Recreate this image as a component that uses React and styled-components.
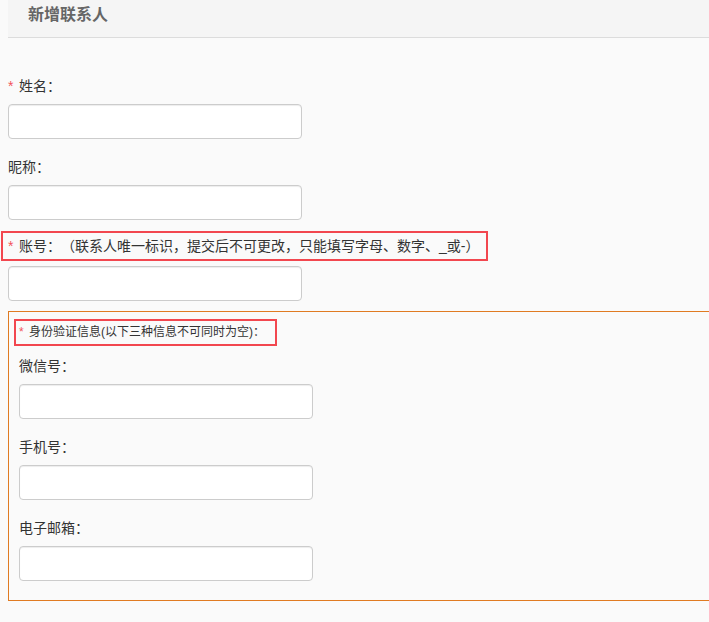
// Add-contact form
import styled, { createGlobalStyle } from 'styled-components'

const GlobalStyle = createGlobalStyle`
  html, body {
    margin: 0;
    background: #fafafa;
    overflow-x: hidden;
  }

  body {
    font-family: "Liberation Sans", "Noto Sans CJK SC", sans-serif;
    color: #333;
    text-spacing-trim: space-all;
  }
`

const Page = styled.div`
  padding-left: 8px;
`

const Header = styled.div`
  background: #f5f5f5;
  border-bottom: 1px solid #dcdcdc;
  height: 37px;
  padding: 0 20px;
`

const Title = styled.h3`
  color: #666;
  font-size: 16px;
  font-weight: bold;
  line-height: 30px;
  margin: 0;
`

const Form = styled.form`
  display: flex;
  flex-direction: column;
  padding-top: 35px;
`

const Field = styled.div`
  display: flex;
  flex-direction: column;
  align-items: flex-start;
  margin-bottom: 15px;
`

const Label = styled.label`
  display: inline-block;
  font-size: 14px;
  line-height: 26px;
  margin-bottom: 5px;

  ${({ $marked }) =>
    $marked &&
    `
    border: 2px solid #f2474f;
    margin: -4px 0 5px -7px;
    padding: 0 7px 0 5px;
  `}
`

const Star = styled.span`
  color: #f2545b;
  display: inline-block;
  width: 11px;
`

const Input = styled.input`
  background: #fff;
  border: 1px solid #ccc;
  border-radius: 4px;
  box-shadow: inset 0 1px 1px rgba(0, 0, 0, 0.075);
  box-sizing: border-box;
  height: 35px;
  padding: 6px 12px;
  width: 294px;
`

const Section = styled.fieldset`
  border: 1px solid #e07b22;
  margin: -5px -20px 0 0;
  min-width: 0;
  padding: 7px 0 4px 10px;
`

const Notice = styled.div`
  border: 2px solid #f2474f;
  font-size: 12px;
  line-height: 23px;
  margin: 0 0 7px -5px;
  padding: 0 10px 0 3px;
  width: fit-content;

  ${Star} {
    width: 10px;
  }
`

const App = () => {
  return (
    <Page>
      <GlobalStyle />
      <Header>
        <Title>新增联系人</Title>
      </Header>

      <Form>
        <Field>
          <Label>
            <Star>*</Star>姓名：
          </Label>
          <Input />
        </Field>

        <Field>
          <Label>昵称：</Label>
          <Input />
        </Field>

        <Field>
          <Label $marked>
            <Star>*</Star>账号：（联系人唯一标识，提交后不可更改，只能填写字母、数字、_或-）
          </Label>
          <Input />
        </Field>

        <Section>
          <Notice>
            <Star>*</Star>身份验证信息(以下三种信息不可同时为空)：
          </Notice>

          <Field>
            <Label>微信号：</Label>
            <Input />
          </Field>

          <Field>
            <Label>手机号：</Label>
            <Input />
          </Field>

          <Field>
            <Label>电子邮箱：</Label>
            <Input />
          </Field>
        </Section>
      </Form>
    </Page>
  )
}

export default App
